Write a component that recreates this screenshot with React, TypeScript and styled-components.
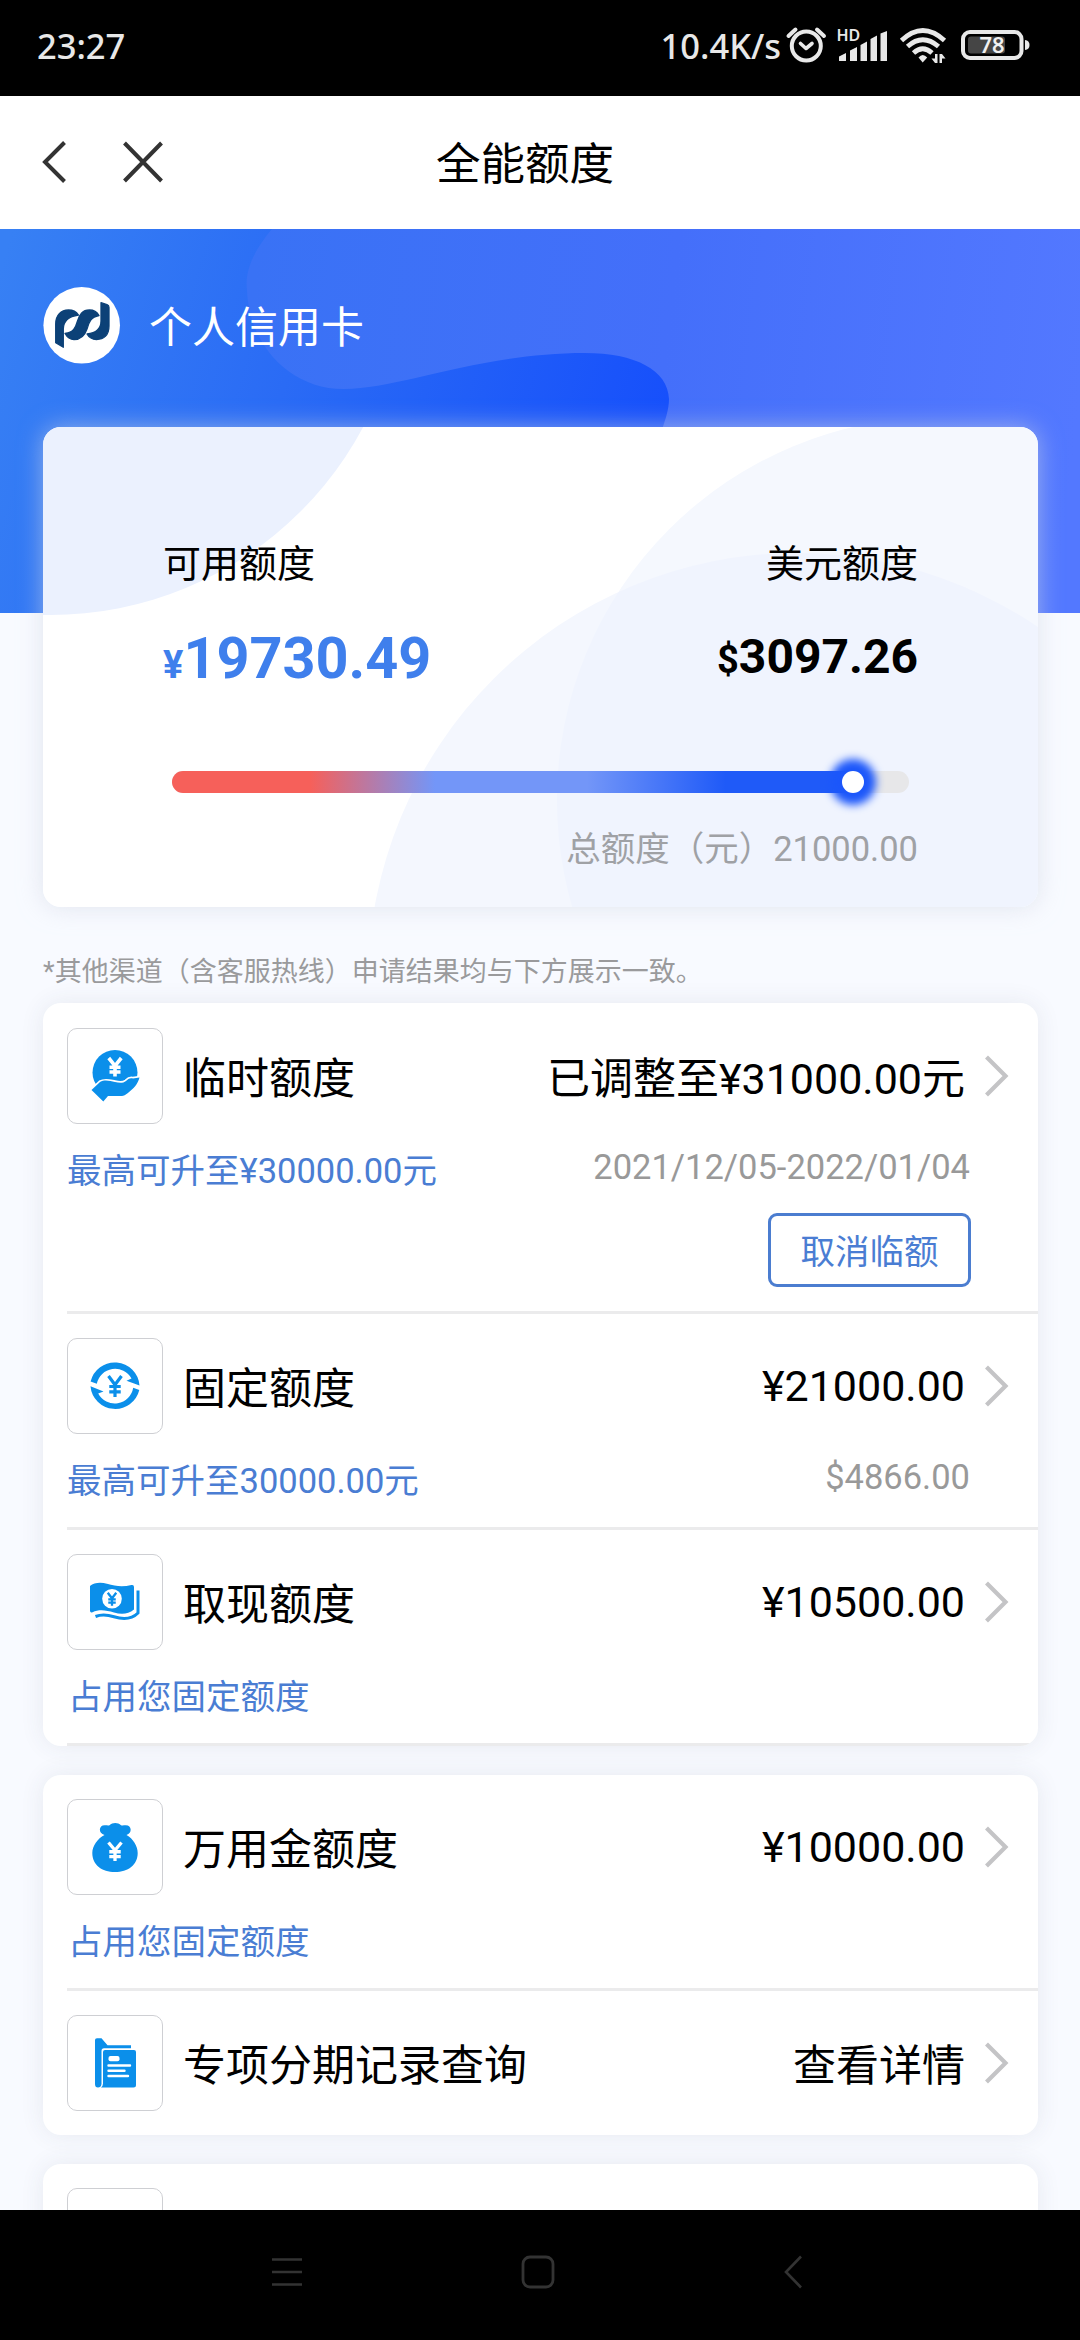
import React from 'react';
import styled, { createGlobalStyle } from 'styled-components';

const GlobalStyle = createGlobalStyle`
  *, *::before, *::after { box-sizing: border-box; }
  html, body { margin: 0; padding: 0; background: #000; }
`;

const Screen = styled.div`
  width: 1080px;
  height: 2340px;
  display: flex;
  flex-direction: column;
  overflow: hidden;
  background: #f8faff;
  color: #000;
  font-family: Roboto, 'Noto Sans CJK SC', sans-serif;
  white-space: nowrap;
`;

/* ---------- status bar ---------- */
const StatusBar = styled.header`
  height: 96px;
  flex: none;
  display: flex;
  align-items: center;
  justify-content: space-between;
  padding: 0 50px 4px 37px;
  background: #000;
  color: #e8e8e8;
  font: 500 34.5px/48px 'Noto Sans', sans-serif;
`;

const StatusRight = styled.div`
  display: flex;
  align-items: center;
`;

const Speed = styled.span`
  width: 123px;
  text-align: right;
`;

const StatusIcons = styled.svg`
  display: block;
  width: 247px;
  height: 48px;
  margin-left: 2px;
`;

/* ---------- title bar ---------- */
const TitleBar = styled.nav`
  height: 133px;
  flex: none;
  display: grid;
  grid-template-columns: 240px 1fr 270px;
  align-items: center;
  background: #fff;
`;

const TitleActions = styled.div`
  display: flex;
  align-items: center;
  gap: 55px;
  padding: 0 0 2px 41px;
`;

const Title = styled.h1`
  margin: 0;
  padding-top: 4px;
  text-align: center;
  font-size: 44.5px;
  line-height: 60px;
  font-weight: 400;
`;

/* ---------- content ---------- */
const Content = styled.main`
  flex: 1;
  min-height: 0;
  overflow: hidden;
  display: grid;
  grid-template-columns: 1080px;
  grid-template-rows: 384px 1fr;
`;

const BannerArt = styled.svg`
  grid-area: 1 / 1;
  display: block;
`;

const Stack = styled.div`
  grid-area: 1 / 1 / 3 / 2;
  z-index: 1;
  padding: 58px 42px 0 43px;
  min-height: 0;
`;

const Owner = styled.div`
  display: flex;
  align-items: center;
  gap: 28px;
  height: 77px;
  color: #fff;
  font-size: 43px;
  line-height: 60px;
`;

const OwnerName = styled.span`
  padding-top: 4px;
`;

const SummaryCard = styled.section`
  display: grid;
  grid-template: 480px / 995px;
  margin-top: 63px;
  border-radius: 18px;
  overflow: hidden;
  background: #fff;
`;

const SummaryShadow = styled.div`
  border-radius: 18px;
  box-shadow: 0 0 25px rgba(208, 213, 226, 0.6);
`;

const SummaryArt = styled.svg`
  grid-area: 1 / 1;
  display: block;
`;

const SummaryBody = styled.div`
  grid-area: 1 / 1;
  z-index: 1;
  padding: 113px 120px 0;
  display: flex;
  flex-direction: column;
`;

const Split = styled.div<{ $h: number; $top?: number }>`
  display: flex;
  justify-content: space-between;
  align-items: center;
  height: ${(p) => p.$h}px;
  padding-top: ${(p) => p.$top ?? 0}px;
`;

const Label = styled.span`
  font-size: 38px;
  line-height: 48px;
`;

const Amount = styled.strong<{ $size: number; $color: string; $lift?: number }>`
  font-size: ${(p) => p.$size}px;
  line-height: 64px;
  font-weight: 700;
  color: ${(p) => p.$color};
  padding-bottom: ${(p) => p.$lift ?? 0}px;
`;

const Sign = styled.span<{ $size: number }>`
  font-size: ${(p) => p.$size}px;
`;

const Track = styled.div`
  display: flex;
  align-items: center;
  height: 22px;
  margin: 76px 9px 0 9px;
  border-radius: 11px;
  background: #e7e7e9;
`;

const Fill = styled.div`
  display: flex;
  align-items: center;
  justify-content: flex-end;
  height: 22px;
  border-radius: 11px;
  background: linear-gradient(90deg, #f6605a 0%, #f6605a 20%, #7396f8 38%, #7396f8 60%, #1f5af8 80%, #1f5af8 100%);
`;

const Thumb = styled.i`
  width: 22px;
  height: 22px;
  border-radius: 50%;
  background: #fff;
  box-shadow: 0 0 8px 12px #1c57fa;
`;

const Total = styled.div`
  margin-top: 32px;
  text-align: right;
  font-size: 34.5px;
  line-height: 48px;
  color: #9fa1a5;
`;

const Note = styled.p`
  margin: 0;
  padding-top: 45px;
  height: 96px;
  font-size: 27px;
  line-height: 40px;
  color: #9a9a9c;
`;

const Card = styled.section`
  margin-bottom: 29px;
  padding-left: 24px;
  border-radius: 18px;
  background: #fff;
  box-shadow: 0 0 24px rgba(60, 70, 90, 0.09);
  overflow: hidden;
`;

const Row = styled.div<{ $h: number; $line?: boolean; $first?: boolean }>`
  height: ${(p) => p.$h}px;
  padding: ${(p) => (p.$first ? 25 : 24)}px 29px 0 0;
  border-bottom: ${(p) => (p.$line ? '3px solid #ebebec' : 'none')};
`;

const RowMain = styled.div`
  display: flex;
  align-items: center;
  height: 96px;
`;

const IconBox = styled.span`
  display: block;
  width: 96px;
  height: 96px;
  border: 1px solid #cecfd3;
  border-radius: 10px;
  svg { display: block; margin: -1px; }
`;

const RowTitle = styled.span`
  margin-left: 20px;
  padding-top: 6px;
  font-size: 43px;
  line-height: 60px;
`;

const RowValue = styled.span<{ $cjk?: boolean }>`
  margin-left: auto;
  margin-right: 18px;
  padding-top: ${(p) => (p.$cjk ? 6 : 0)}px;
  font-size: 43px;
  line-height: 60px;
`;

const RowSub = styled.div`
  display: flex;
  justify-content: space-between;
  padding: 21px 39px 0 0;
  font-size: 34.5px;
  line-height: 44px;
`;

const Hint = styled.span<{ $indent?: boolean }>`
  padding-top: 4px;
  padding-left: ${(p) => (p.$indent ? 1 : 0)}px;
  color: #4a7dd3;
`;

const Aside = styled.span`
  color: #999;
`;

const CancelRow = styled.div`
  display: flex;
  justify-content: flex-end;
  padding: 20px 38px 0 0;
`;

const CancelButton = styled.button`
  width: 203px;
  height: 74px;
  padding: 4px 0 0;
  border: 3px solid #4b7dd0;
  border-radius: 9px;
  background: #fff;
  color: #4a7dd3;
  font: 400 34.5px/48px Roboto, 'Noto Sans CJK SC', sans-serif;
`;

/* ---------- system navigation ---------- */
const SystemNav = styled.footer`
  height: 130px;
  flex: none;
  display: grid;
  grid-template-columns: 251px 251px 259px;
  align-items: center;
  justify-items: center;
  padding: 0 0 6px 161px;
  background: #000;
`;

/* ---------- drawings ---------- */
const BLUE = '#0b8fea';

const Yen = ({ x, y, w, h, color, t = 3.6 }: { x: number; y: number; w: number; h: number; color: string; t?: number }) => (
  <path
    d={`M${x - w / 2} ${y} L${x} ${y + h * 0.42} L${x + w / 2} ${y} M${x} ${y + h * 0.4} V${y + h} M${x - w * 0.44} ${y + h * 0.5} H${x + w * 0.44} M${x - w * 0.44} ${y + h * 0.76} H${x + w * 0.44}`}
    fill="none"
    stroke={color}
    strokeWidth={t}
  />
);

const HandIcon = () => (
  <svg width="96" height="96" viewBox="0 0 96 96">
    <circle cx="48" cy="44.5" r="22.5" fill={BLUE} />
    <path
      d="M24.5 62 L33 54 C38 51 43 53 48 54 C52 55 56 55.500 59 53 C61 51 63 49.500 66 50.500 L72.500 49.500 C71 56 66 61 61.5 64.5 C58 67.500 56 68 53 68 H41 L36.300 73.500 Z"
      fill={BLUE}
      stroke="#fff"
      strokeWidth="3.400"
      paintOrder="stroke"
    />
    <Yen x={48} y={30} w={12.5} h={18.5} color="#fff" />
  </svg>
);

const CycleIcon = () => (
  <svg width="96" height="96" viewBox="0 0 96 96" fill={BLUE}>
    <path d="M23.600 43.600 A24.800 24.800 0 0 1 72.500 47.500 L59.500 42.800 L64.500 40.500 A18.700 18.700 0 0 0 29.800 45.800 Z" />
    <path d="M72.300 52 A24.800 24.800 0 0 1 23.500 48.200 L36.500 53.500 L31.200 55.500 A18.700 18.700 0 0 0 66.200 49.800 Z" />
    <Yen x={48} y={38} w={13} h={21} color={BLUE} t={3.2} />
  </svg>
);

const BillIcon = () => (
  <svg width="96" height="96" viewBox="0 0 96 96">
    <path
      d="M23 32 C27 28.500 34 28.200 40 29.800 C49 32.500 56 33 64.500 31 Q67 30.500 67 33 V55.500 C61 60.500 54 60.500 47 58.500 C39 56 32 55 25.500 58.200 Q23 59 23 56.500 Z"
      fill={BLUE}
    />
    <path d="M71 36.500 V59 C64 66 54 65 47 62.800 C41 60.800 34.500 60 28.500 62.500" fill="none" stroke={BLUE} strokeWidth="3" />
    <circle cx="45" cy="44.800" r="9.800" fill="#fff" />
    <Yen x={45} y={38.8} w={8.5} h={13} color={BLUE} t={2.3} />
  </svg>
);

const BagIcon = () => (
  <svg width="96" height="96" viewBox="0 0 96 96" fill={BLUE}>
    <path d="M37.500 36 C31 34.500 31.500 26 38 26.300 C40 26.300 41 26.800 42.500 26.300 C45.500 23.200 51 23.200 54 26.300 C55.500 26.800 57 26.300 58.500 26.300 C65 26 65.500 34.500 59.500 36 C66 39.500 70.700 47 70.700 54 C70.700 66 61 73 48 73 C35 73 25.300 66 25.300 54 C25.300 47 30.500 39.500 37.500 36 Z" />
    <Yen x={48} y={43.5} w={13} h={18.5} color="#fff" t={3.3} />
  </svg>
);

const FolderIcon = () => (
  <svg width="96" height="96" viewBox="0 0 96 96" fill={BLUE}>
    <path d="M28 25 Q28 23.300 30 23.300 H34.500 L40.500 30.200 H64 V33.300 H37 Q34.500 33.300 34.500 36 V69 Q34 72.500 31 72.500 Q28 72.500 28 69 Z" />
    <path d="M36 37 Q36 35 38 35 H67 Q69 35 69 37 V70 Q69 72.500 66.500 72.500 H34 Q36 71 36 68.500 Z" />
    <rect x="41.500" y="41" width="11" height="5.200" rx="2" fill="#fff" />
    <path d="M41.500 50.500 H63 M41.500 55.700 H57.500 M41.500 61 H61" stroke="#fff" strokeWidth="2.400" strokeLinecap="round" />
  </svg>
);

const Chevron = () => (
  <svg width="26" height="42" viewBox="0 0 26 42" fill="none" stroke="#c4c4c6" strokeWidth="4.200">
    <path d="M3.500 2 L22.500 21 L3.500 40" />
  </svg>
);

const Logo = () => (
  <svg width="78" height="77" viewBox="0 0 78 77">
    <circle cx="38.700" cy="38.300" r="38.300" fill="#fff" />
    <g fill="#0c4177" stroke="#0c4177" strokeWidth="1.300" strokeLinejoin="round">
      <path d="M12.700 55.700 V37 C12.700 28 18 23 25.500 23 C30 23 33.500 25 35.500 28 C28 29 20.300 33 20.300 42 V60.300 Z" />
      <path d="M22 46.500 C24 50 27 52.500 31 52.500 C38 52.500 42 48 44 42 C46 35 48 30 56 28.500 C54 25 50.500 23 46.500 23 C39 23 36.500 28 34.500 34 C32.500 41 30.500 45.500 22 46.500 Z" />
      <path d="M58 15.700 L64 17.500 Q66 18.200 66 20.500 V39 C66 48 61 52.500 53.500 52.500 C49 52.500 46 50.500 44 47 C53 46 58 42 58 34 Z" />
    </g>
  </svg>
);

const StatusGlyphs = () => (
  <StatusIcons viewBox="783 22 247 48" fill="none" stroke="#e8e8e8">
    <circle cx="806.300" cy="46" r="14.500" strokeWidth="4" />
    <path d="M800.500 43.500 L806 48.500 L812 43.500" strokeWidth="3.600" strokeLinecap="round" strokeLinejoin="round" />
    <path d="M788.500 36 L795.500 29.500 M824 36 L817 29.500" strokeWidth="4" strokeLinecap="round" />
    <text x="836.500" y="41" fill="#e8e8e8" stroke="none" fontFamily="Noto Sans, sans-serif" fontWeight="600" fontSize="16">HD</text>
    <g fill="#e8e8e8" stroke="none">
      <path d="M839 56.500 L846 53 V61 H839 Z M850 50.500 L857 47 V61 H850 Z M860.500 45 L867 41.500 V61 H860.500 Z M870.500 39 L877 35.500 V61 H870.500 Z M880.500 33.500 L887 31 V61 H880.500 Z" />
      <path d="M922.700 62.500 L918.500 57.500 Q922.700 52.500 927.200 57.500 Z" />
      <path d="M937.500 54 V63 H935 L931.500 58.500 H935 V54 Z M939.500 63 V54 H942 L945.500 58.500 H942 V63 Z" />
      <rect x="968" y="36.500" width="37" height="17" rx="3" fill="#454545" />
      <path d="M1025 40 Q1029.500 40.500 1029.500 45 Q1029.500 49.500 1025 50 Z" />
    </g>
    <path d="M901.500 40.500 Q922.700 20.500 944.500 40.500" strokeWidth="4.800" />
    <path d="M907.500 46.500 Q922.700 33 938.500 46.500" strokeWidth="4.800" />
    <path d="M913.500 53 Q922.700 44.500 932 53" strokeWidth="4.800" />
    <rect x="963" y="32" width="58.500" height="26" rx="7" strokeWidth="4" />
    <text x="992" y="53" textAnchor="middle" fill="#f0f0f0" stroke="none" fontFamily="Noto Sans, sans-serif" fontWeight="600" fontSize="22">78</text>
  </StatusIcons>
);

const Banner = () => (
  <BannerArt width="1080" height="384" viewBox="0 229 1080 384">
    <defs>
      <linearGradient id="deep" x1="0" y1="270" x2="650" y2="460" gradientUnits="userSpaceOnUse">
        <stop offset="0" stopColor="#3780f4" />
        <stop offset="0.45" stopColor="#2a6bf5" />
        <stop offset="1" stopColor="#1750fb" />
      </linearGradient>
      <linearGradient id="light" x1="250" y1="300" x2="1080" y2="400" gradientUnits="userSpaceOnUse">
        <stop offset="0" stopColor="#3972f5" />
        <stop offset="0.5" stopColor="#446ffa" />
        <stop offset="1" stopColor="#5378ff" />
      </linearGradient>
    </defs>
    <rect y="229" width="1080" height="384" fill="url(#deep)" />
    <path
      d="M272 229 C250 255 245 275 247 290 C249 345 290 389 344 389 C400 389 480 353 585 353 C635 353 668 370 669 399 C669 410 665 420 662 430 V613 H1080 V229 Z"
      fill="url(#light)"
    />
  </BannerArt>
);

const SummaryBackdrop = () => (
  <SummaryArt width="995" height="480" viewBox="43 427 995 480">
    <defs>
      <clipPath id="upper">
        <circle cx="940" cy="800" r="383" />
      </clipPath>
    </defs>
    <circle cx="50" cy="260" r="355" fill="#ebf1fe" />
    <circle cx="940" cy="800" r="383" fill="#f5f8fe" />
    <circle cx="797" cy="982" r="429" fill="#f4f7fe" />
    <circle cx="797" cy="982" r="429" fill="#f0f4fe" clipPath="url(#upper)" />
  </SummaryArt>
);

type Item = {
  title: string;
  value: string;
  icon: () => React.ReactElement;
  height: number;
  cjk?: boolean;
  first?: boolean;
  line?: boolean;
  hint?: string;
  indent?: boolean;
  aside?: string;
  action?: string;
};

const groups: Item[][] = [
  [
    { title: '临时额度', value: '已调整至¥31000.00元', cjk: true, icon: HandIcon, height: 311, first: true, line: true, hint: '最高可升至¥30000.00元', aside: '2021/12/05-2022/01/04', action: '取消临额' },
    { title: '固定额度', value: '¥21000.00', icon: CycleIcon, height: 216, line: true, hint: '最高可升至30000.00元', aside: '$4866.00' },
    { title: '取现额度', value: '¥10500.00', icon: BillIcon, height: 216, line: true, hint: '占用您固定额度', indent: true },
  ],
  [
    { title: '万用金额度', value: '¥10000.00', icon: BagIcon, height: 216, line: true, hint: '占用您固定额度', indent: true },
    { title: '专项分期记录查询', value: '查看详情', cjk: true, icon: FolderIcon, height: 144 },
  ],
];

const QuotaRow = ({ item }: { item: Item }) => (
  <Row $h={item.height} $line={item.line} $first={item.first}>
    <RowMain>
      <IconBox>
        <item.icon />
      </IconBox>
      <RowTitle>{item.title}</RowTitle>
      <RowValue $cjk={item.cjk}>{item.value}</RowValue>
      <Chevron />
    </RowMain>
    {item.hint && (
      <RowSub>
        <Hint $indent={item.indent}>{item.hint}</Hint>
        {item.aside && <Aside>{item.aside}</Aside>}
      </RowSub>
    )}
    {item.action && (
      <CancelRow>
        <CancelButton>{item.action}</CancelButton>
      </CancelRow>
    )}
  </Row>
);

export default function App() {
  const available = 19730.49;
  const total = 21000;
  const percent = (available / total) * 100;

  return (
    <>
      <GlobalStyle />
      <Screen>
        <StatusBar>
          <span>23:27</span>
          <StatusRight>
            <Speed>10.4K/s</Speed>
            <StatusGlyphs />
          </StatusRight>
        </StatusBar>

        <TitleBar>
          <TitleActions>
            <svg width="26" height="42" viewBox="0 0 26 42" fill="none" stroke="#333" strokeWidth="4">
              <path d="M23.500 1.500 L4 21 L23.500 40.500" />
            </svg>
            <svg width="42" height="42" viewBox="0 0 42 42" fill="none" stroke="#333" strokeWidth="4">
              <path d="M2.500 2 L39.500 40 M39.500 2 L2.500 40" />
            </svg>
          </TitleActions>
          <Title>全能额度</Title>
        </TitleBar>

        <Content>
          <Banner />
          <Stack>
            <Owner>
              <Logo />
              <OwnerName>个人信用卡</OwnerName>
            </Owner>

            <SummaryShadow>
              <SummaryCard>
                <SummaryBackdrop />
                <SummaryBody>
                  <Split $h={48}>
                    <Label>可用额度</Label>
                    <Label>美元额度</Label>
                  </Split>
                  <Split $h={107} $top={40}>
                    <Amount $size={57.6} $color="#3f7fec">
                      <Sign $size={38}>¥</Sign>19730.49
                    </Amount>
                    <Amount $size={48} $color="#000" $lift={7}>
                      <Sign $size={38}>$</Sign>3097.26
                    </Amount>
                  </Split>
                  <Track>
                    <Fill style={{ width: `${percent}%` }}>
                      <Thumb />
                    </Fill>
                  </Track>
                  <Total>总额度（元）21000.00</Total>
                </SummaryBody>
              </SummaryCard>
            </SummaryShadow>

            <Note>*其他渠道（含客服热线）申请结果均与下方展示一致。</Note>

            {groups.map((items) => (
              <Card key={items[0].title}>
                {items.map((item) => (
                  <QuotaRow key={item.title} item={item} />
                ))}
              </Card>
            ))}
            <Card>
              <Row $h={216}>
                <IconBox />
              </Row>
            </Card>
          </Stack>
        </Content>

        <SystemNav>
          <svg width="32" height="34" viewBox="0 0 32 34" stroke="#333" strokeWidth="2.600">
            <path d="M1 4.500 H31 M1 17 H31 M1 29.500 H31" />
          </svg>
          <svg width="34" height="34" viewBox="0 0 34 34" fill="none" stroke="#333" strokeWidth="2.800">
            <rect x="2" y="2" width="30" height="30" rx="7" />
          </svg>
          <svg width="20" height="34" viewBox="0 0 20 34" fill="none" stroke="#333" strokeWidth="2.600">
            <path d="M18 1.500 L3 17 L18 32.500" />
          </svg>
        </SystemNav>
      </Screen>
    </>
  );
}
